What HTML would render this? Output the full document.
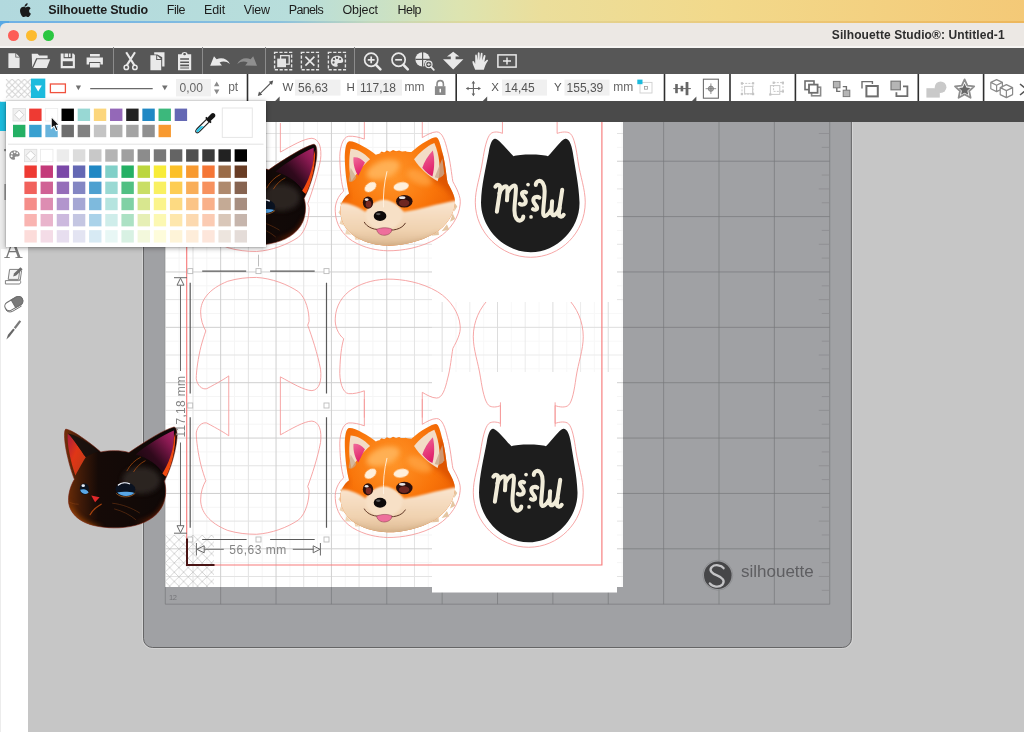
<!DOCTYPE html>
<html>
<head>
<meta charset="utf-8">
<title>Silhouette Studio</title>
<style>
html,body{margin:0;padding:0;}
body{width:1024px;height:732px;overflow:hidden;position:relative;background:#c6c6c6;font-family:"Liberation Sans",sans-serif;}
.abs{position:absolute;}
#menubar,#titlebar,.lbl,svg.abs{opacity:0.999;}
#menubar{left:0;top:0;width:1024px;height:22px;background:linear-gradient(90deg,#b2d9de 0%,#b8dedb 29%,#c9e1c6 37%,#dde4b0 45%,#ebde9b 53%,#f2d98b 70%,#f4c977 100%);}
#menubar span{position:absolute;top:3px;font-size:13px;color:#1c1c1c;white-space:nowrap;line-height:15px;}
#titlebar{left:0;top:22.6px;width:1024px;height:24.4px;background:#ece8e4;border-top-left-radius:6px;}
#mline{left:0;top:21.2px;width:1024px;height:1.6px;background:linear-gradient(90deg,#6eb0e5 0%,#8ac0de 27%,#c2d8bd 36%,#dfd99c 46%,#ecc878 75%,#edb75c 100%);}
#blu{left:0;top:21px;width:9px;height:10px;background:#58a8e4;}
#tbline{left:0;top:46.4px;width:1024px;height:1.2px;background:#f7f5f3;}
#titlebar .t{position:absolute;right:19.3px;letter-spacing:0.09px;top:5.8px;font-size:12px;font-weight:bold;color:#2d2d2d;white-space:nowrap;line-height:14px;}
.dot{position:absolute;top:7.2px;width:11px;height:11px;border-radius:50%;}
#tb1{left:0;top:47px;width:1024px;height:27px;background:#575757;}
#tb2{left:0;top:74px;width:1024px;height:27px;background:#fff;}
#tabbar{left:0;top:101px;width:1024px;height:21px;background:#4a4a4a;}
#lefttools{left:0;top:101px;width:28px;height:631px;background:#fff;}
.vsep{position:absolute;top:47px;width:1px;height:27px;background:#8a8a8a;}
.bsep{position:absolute;top:74px;width:2px;height:27px;background:#333;}
.fld{position:absolute;top:79px;height:17px;background:#efefef;}
.lbl{position:absolute;font-size:11.5px;color:#555;line-height:13px;white-space:nowrap;}
</style>
</head>
<body>
<!-- canvas svg -->
<svg class="abs" id="canvas" style="left:0;top:0;opacity:0.999" width="1024" height="732" viewBox="0 0 1024 732">
<defs>
<clipPath id="pageclip"><rect x="165" y="122" width="458" height="465"/></clipPath>
<clipPath id="matclip"><rect x="141" y="122" width="713" height="529"/></clipPath>
<pattern id="hatch" x="165" y="535" width="9.3" height="9.3" patternUnits="userSpaceOnUse"><path d="M0 0L9.3 9.3M9.3 0L0 9.3" stroke="#c9c9c9" stroke-width="0.8" fill="none"/></pattern>
<filter id="b1" x="-10%" y="-10%" width="120%" height="120%"><feGaussianBlur stdDeviation="6"/></filter>
<filter id="b2" x="-20%" y="-20%" width="140%" height="140%"><feGaussianBlur stdDeviation="14"/></filter>
<filter id="b3" x="-20%" y="-20%" width="140%" height="140%"><feGaussianBlur stdDeviation="3"/></filter>
<!-- misul silhouette, coords in 5.23x zoom space of window (460,120) -->
<g id="misul">
<path d="M185 98C170 95 158 120 150 170C135 250 112 340 110 430C108 565 230 692 370 692C510 692 628 565 625 430C622 340 602 250 590 170C582 120 568 95 550 98C530 102 490 160 460 190C430 178 310 178 280 190C250 160 205 102 185 98Z" fill="#1d1d1d"/>
<g transform="translate(130.7,261.5) scale(0.4596)" fill="none" stroke="#f1ecd9" stroke-width="46" stroke-linecap="round" stroke-linejoin="round">
<g id="mishalf">
<path d="M118 190C135 160 180 160 172 215C165 290 145 400 135 475"/>
<path d="M165 265C190 200 250 150 255 215C258 270 252 310 250 345M258 255C285 195 350 140 352 205C352 280 335 380 335 460C335 540 370 590 410 572C430 562 436 545 436 530"/>
<path d="M468 255C445 238 412 250 424 282C436 312 476 330 462 370C452 400 412 398 396 385"/>
<circle cx="490" cy="166" r="21" fill="#f1ecd9" stroke="none"/>
</g>
<use href="#mishalf" transform="rotate(180 507 350)"/>
</g>
</g>
<!-- misul outline (red) in same coordinate space -->
<path id="misulout" d="M222 -40V70C205 62 175 58 160 72C140 92 128 150 118 215C105 300 80 360 80 430C80 590 215 718 370 718C525 718 655 590 655 430C655 360 630 300 617 215C608 150 598 92 578 72C563 58 530 62 508 70V-40" fill="none"/>
<!-- fox: coords in 5.23x zoom space of window (320,120) -->
<radialGradient id="fxo" cx="0.45" cy="0.35" r="0.7"><stop offset="0" stop-color="#ff962a"/><stop offset="0.55" stop-color="#f9750a"/><stop offset="1" stop-color="#e95a00"/></radialGradient>
<linearGradient id="fxc" x1="0" y1="0" x2="0" y2="1"><stop offset="0" stop-color="#fbe6d0"/><stop offset="0.6" stop-color="#f0d2b0"/><stop offset="1" stop-color="#d8b48c"/></linearGradient>
<linearGradient id="fxp" x1="0" y1="0" x2="0.3" y2="1"><stop offset="0" stop-color="#f06a9a"/><stop offset="1" stop-color="#e0206a"/></linearGradient>
<clipPath id="fxclip"><path id="fxhead" d="M150 112C135 118 128 160 130 215C132 275 140 340 152 385C125 405 105 440 106 475C108 530 135 580 185 610C245 645 300 655 352 657C420 658 520 640 600 592C665 552 700 490 705 440C712 410 690 370 668 330C660 290 655 220 640 170C630 125 620 92 608 90C590 88 530 120 478 168C440 160 330 165 292 182C255 150 175 105 150 112Z"/></clipPath>
<g id="fox">
<path d="M124 418L104 436L114 452ZM110 462L96 484L108 500ZM112 515L102 542L126 552ZM138 572L132 598L164 600ZM180 604L184 626L214 626Z" fill="#efd5b6"/>
<path d="M702 430L718 452L702 478ZM694 488L708 518L680 532ZM664 545L676 574L636 582ZM620 580L622 602L580 606Z" fill="#e4c6a2"/>
<path d="M310 176L322 165L336 170L350 160L366 166L382 157L398 164L414 159L430 167L448 163L462 172Z" fill="#f7780f"/>
<use href="#fxhead" fill="url(#fxo)"/>
<g clip-path="url(#fxclip)">
<!-- darker right side shading -->
<path d="M560 300C620 330 690 380 720 450L720 250L640 150Z" fill="#d95000" filter="url(#b2)" opacity="0.8"/>
<path d="M120 250C125 330 140 380 160 400L110 420Z" fill="#d95000" filter="url(#b2)" opacity="0.7"/>
<!-- highlight -->
<ellipse cx="330" cy="260" rx="90" ry="45" fill="#ffb45a" filter="url(#b2)" opacity="0.9" transform="rotate(-20 330 260)"/>
<ellipse cx="520" cy="300" rx="70" ry="35" fill="#ffa848" filter="url(#b2)" opacity="0.7" transform="rotate(25 520 300)"/>
<!-- cream cheeks / muzzle -->
<path d="M90 440C130 420 190 450 240 480C270 440 300 420 335 418C370 420 400 445 440 480C520 470 600 440 720 420L720 680L90 680Z" fill="url(#fxc)" filter="url(#b1)"/>
<ellipse cx="335" cy="500" rx="95" ry="75" fill="#f7e0c6" filter="url(#b1)"/>
<path d="M150 600C260 670 470 670 620 590L620 700L150 700Z" fill="#c9a47c" filter="url(#b2)" opacity="0.8"/>
<!-- ears inner -->
<path d="M160 150C150 200 150 270 165 320C190 280 230 230 262 205C230 170 190 150 160 150Z" fill="#f3dcc6"/>
<path d="M175 195C172 235 185 270 200 292C215 265 225 240 235 222C215 200 195 192 175 195Z" fill="url(#fxp)"/>
<path d="M598 120C560 135 520 170 492 205C520 250 570 295 615 320C635 270 625 180 598 120Z" fill="#f3dcc6"/>
<path d="M590 160C565 185 545 220 535 250C555 275 575 290 588 295C600 250 600 200 590 160Z" fill="url(#fxp)"/>
<path d="M600 300C620 310 640 300 650 280L640 200Z" fill="#c8a88c" filter="url(#b3)" opacity="0.8"/>
<path d="M150 320C165 330 180 320 190 300L160 250Z" fill="#c8a88c" filter="url(#b3)" opacity="0.7"/>
<!-- brow spots -->
<ellipse cx="265" cy="350" rx="34" ry="22" fill="#fff0dc" filter="url(#b3)" transform="rotate(-35 265 352)"/>
<ellipse cx="425" cy="348" rx="40" ry="22" fill="#fff0dc" filter="url(#b3)" transform="rotate(-10 425 350)"/>
<!-- forehead stripe -->
<path d="M350 270C335 330 330 390 332 455" fill="none" stroke="#fff3e4" stroke-width="5" stroke-linecap="round" opacity="0.9"/>
</g>
<!-- eyes -->
<ellipse cx="251" cy="432" rx="27" ry="32" fill="#2a0f0c"/>
<ellipse cx="254" cy="440" rx="15" ry="18" fill="#7a2a22"/>
<ellipse cx="244" cy="416" rx="10" ry="7" fill="#fff" opacity="0.9"/>
<ellipse cx="441" cy="425" rx="43" ry="33" fill="#2a0f0c"/>
<ellipse cx="440" cy="434" rx="27" ry="18" fill="#6e2620"/>
<ellipse cx="430" cy="406" rx="17" ry="7" fill="#fff" opacity="0.9"/>
<!-- nose -->
<ellipse cx="314" cy="502" rx="33" ry="26" fill="#0e0a0a"/>
<ellipse cx="305" cy="492" rx="12" ry="6" fill="#777" opacity="0.7"/>
<!-- mouth -->
<path d="M232 535C245 562 290 580 330 570C380 585 430 570 446 540" fill="none" stroke="#5a3020" stroke-width="5" stroke-linecap="round"/>
<path d="M296 572C300 600 330 606 345 602C365 598 378 585 375 570C350 560 320 562 296 572Z" fill="#ee6f9c" stroke="#7a3040" stroke-width="2.5"/>
</g>
<path id="foxout" d="M150 85C118 88 100 150 104 215C106 280 112 330 124 372C95 395 76 440 80 480C82 545 118 600 170 633C235 672 300 682 352 684C430 685 530 668 615 618C685 575 728 505 733 440C738 400 715 360 695 322C688 285 682 215 667 162C655 110 640 62 610 62C585 62 555 80 535 92V-40M232 -40V100C205 90 175 83 150 85" fill="none"/>
<!-- black cat: coords in 5.23x zoom space of window (40,400) -->
<linearGradient id="ctb" x1="0" y1="0" x2="1" y2="0"><stop offset="0" stop-color="#743008"/><stop offset="0.13" stop-color="#441c08"/><stop offset="0.3" stop-color="#150a07"/><stop offset="1" stop-color="#0e0807"/></linearGradient>
<linearGradient id="cte1" x1="0" y1="0" x2="1" y2="1"><stop offset="0" stop-color="#a81c40"/><stop offset="0.45" stop-color="#e03616"/><stop offset="1" stop-color="#b83c18"/></linearGradient>
<linearGradient id="cte2" x1="0" y1="1" x2="1" y2="0"><stop offset="0" stop-color="#0e0707"/><stop offset="0.45" stop-color="#30091c"/><stop offset="0.8" stop-color="#8a1a52"/><stop offset="1" stop-color="#b02468"/></linearGradient>
<clipPath id="ctclip"><path id="cthead" d="M135 152C122 160 128 230 145 300C155 345 168 385 180 415C158 450 145 500 150 540C158 590 200 632 265 652C320 668 400 675 470 662C550 648 615 610 642 550C660 510 662 460 650 425C680 370 705 290 715 215C720 170 715 138 698 142C650 155 560 210 465 275C430 262 360 262 318 272C275 235 180 160 135 152Z"/></clipPath>
<g id="cat">
<use href="#cthead" fill="url(#ctb)" stroke="#7a2010" stroke-width="3"/>
<g clip-path="url(#ctclip)">
<ellipse cx="530" cy="420" rx="100" ry="70" fill="#342e2c" filter="url(#b2)" opacity="0.75"/>
<path d="M150 520C170 600 240 650 330 660L150 700Z" fill="#a04808" filter="url(#b2)" opacity="0.8"/>
<path d="M470 640C560 640 630 590 650 520L700 650Z" fill="#8a2a08" filter="url(#b2)" opacity="0.6"/>
<!-- left ear inner -->
<path d="M145 175C140 230 160 320 185 395C205 360 225 320 240 300C210 260 175 200 145 175Z" fill="url(#cte1)"/>
<path d="M145 175C175 200 210 260 240 300C262 285 285 275 305 270C255 225 190 180 145 175Z" fill="#16100e" opacity="0.85"/>
<!-- right ear inner -->
<path d="M700 160C640 185 560 235 500 285C560 300 620 340 650 395C685 330 705 240 700 160Z" fill="url(#cte2)"/>
<path d="M500 285C560 300 620 340 650 395C600 330 560 300 500 285Z" fill="#0c0707"/><path d="M700 200C700 260 670 340 640 385C650 395 655 400 660 400C690 340 710 260 708 170Z" fill="#f04a10"/>

<!-- orange whisker-ish strokes -->
<path d="M455 370C470 340 495 315 525 300M490 375C505 350 525 330 550 318" fill="none" stroke="#c85a10" stroke-width="4" stroke-linecap="round" opacity="0.8"/>
<path d="M380 540C430 545 480 565 520 590M390 570C430 580 470 600 500 625M200 545C180 545 165 540 155 535" fill="none" stroke="#9a4a18" stroke-width="3" stroke-linecap="round" opacity="0.7"/>
<!-- muzzle lines -->
<path d="M262 600C275 570 300 560 320 545" fill="none" stroke="#c85010" stroke-width="6" stroke-linecap="round" opacity="0.8"/>
</g>
<!-- eyes -->
<ellipse cx="232" cy="465" rx="24" ry="30" fill="#0c1420"/>
<path d="M210 470C215 490 235 498 254 485C250 470 230 462 210 470Z" fill="#5aa8e8"/>
<ellipse cx="226" cy="448" rx="9" ry="7" fill="#e8f2ff"/>
<ellipse cx="447" cy="468" rx="52" ry="36" fill="#0a1220"/>
<path d="M404 484C424 506 470 508 494 486C470 480 430 478 404 484Z" fill="#58a6e6"/>
<path d="M410 445C425 432 450 430 468 438" fill="none" stroke="#f2f6ff" stroke-width="7" stroke-linecap="round"/>
<path d="M398 488C420 512 470 514 498 488" fill="none" stroke="#c87830" stroke-width="4" opacity="0.8"/>
<!-- nose -->
<path d="M268 500L312 508L288 535Z" fill="#e0282a"/>
</g>
<!-- cat offset outline, zoom coords of window (180,410) -->
<path id="catout" d="M255 -22V135C235 120 200 100 140 68C115 62 90 85 85 120C85 160 95 230 110 290C118 320 128 350 135 370C120 395 108 430 108 470C108 530 150 590 250 630C300 645 350 650 400 650C480 645 560 615 620 575C660 540 676 470 675 420L668 400C690 340 720 250 735 170C742 110 730 62 690 58C650 58 580 100 525 130V-22" fill="none"/>
<path id="catoutfull" d="M318 142C270 112 200 80 140 68C115 62 90 85 85 120C85 160 95 230 110 290C118 320 128 350 135 370C120 395 108 430 108 470C108 530 150 590 250 630C300 645 350 650 400 650C480 645 560 615 620 575C660 540 676 470 675 420L668 400C690 340 720 250 735 170C742 110 730 62 690 58C650 58 560 105 465 148C430 135 360 132 318 142Z" fill="none"/>
<clipPath id="c302"><rect x="432" y="302" width="200" height="200"/></clipPath>

</defs>
<g clip-path="url(#matclip)">
<rect x="142.6" y="60" width="709.8" height="588.3" rx="9.5" fill="none" stroke="#d6d6d6" stroke-width="1"/>
<rect x="143.5" y="60" width="707.9" height="587.5" rx="9" fill="#a0a1a4" stroke="#5c5c5e" stroke-width="0.9"/>
<path d="M165.3 100V604.2M220.67 100V604.2M276.04 100V604.2M331.41 100V604.2M386.78 100V604.2M442.15 100V604.2M497.52 100V604.2M552.89 100V604.2M608.26 100V604.2M663.63 100V604.2M719 100V604.2M774.37 100V604.2M829.74 100V604.2M165.3 105.85H829.8M165.3 161.22H829.8M165.3 216.59H829.8M165.3 271.96H829.8M165.3 327.33H829.8M165.3 382.7H829.8M165.3 438.07H829.8M165.3 493.44H829.8M165.3 548.81H829.8M165.3 604.18H829.8" stroke="#77787b" stroke-width="0.7" fill="none"/>
<path d="M821.8 119.69H829.8M818.8 133.53H829.8M821.8 147.38H829.8M821.8 175.06H829.8M818.8 188.91H829.8M821.8 202.75H829.8M821.8 230.43H829.8M818.8 244.28H829.8M821.8 258.12H829.8M821.8 285.8H829.8M818.8 299.64H829.8M821.8 313.49H829.8M821.8 341.17H829.8M818.8 355.01H829.8M821.8 368.86H829.8M821.8 396.54H829.8M818.8 410.38H829.8M821.8 424.23H829.8M821.8 451.91H829.8M818.8 465.75H829.8M821.8 479.6H829.8M821.8 507.28H829.8M818.8 521.12H829.8M821.8 534.97H829.8M821.8 562.65H829.8M818.8 576.49H829.8M821.8 590.34H829.8" stroke="#8b8c8f" stroke-width="0.8" fill="none"/>
<text x="169" y="600.4" font-size="7.5" fill="#747578" font-family="Liberation Sans, sans-serif" letter-spacing="-0.4">12</text>
<circle cx="717.8" cy="575.2" r="15" fill="none" stroke="#8a8b8e" stroke-width="0.8"/>
<circle cx="717.8" cy="575.2" r="13.8" fill="#464648"/>
<path d="M723.6 568.2C721.4 565 715 564 711.8 567C708.6 570.4 712 573.6 717 575.4C722.6 577.6 725.4 581 722.4 584.6C719.2 588 712.4 587 709.8 583.4" fill="none" stroke="#c4c4c6" stroke-width="2.3" stroke-linecap="round"/>
<text x="741" y="576.7" font-size="17" fill="#5e5e61" font-family="Liberation Sans, sans-serif">silhouette</text>
</g>
<rect x="165" y="122" width="458" height="465" fill="#fff"/>
<g clip-path="url(#pageclip)">
<path d="M179.14 122V587M206.83 122V587M234.51 122V587M262.2 122V587M289.88 122V587M317.57 122V587M345.25 122V587M372.94 122V587M400.62 122V587M428.31 122V587M455.99 122V587M483.68 122V587M511.36 122V587M539.05 122V587M566.73 122V587M594.42 122V587M622.1 122V587M165 147.38H623M165 175.06H623M165 202.75H623M165 230.43H623M165 258.12H623M165 285.8H623M165 313.49H623M165 341.17H623M165 368.86H623M165 396.54H623M165 424.23H623M165 451.91H623M165 479.6H623M165 507.28H623M165 534.97H623M165 562.65H623" stroke="#f5f5f5" stroke-width="1" fill="none"/>
<path d="M192.99 122V587M248.36 122V587M303.72 122V587M359.09 122V587M414.46 122V587M469.83 122V587M525.2 122V587M580.57 122V587M165 133.53H623M165 188.91H623M165 244.28H623M165 299.64H623M165 355.01H623M165 410.38H623M165 465.75H623M165 521.12H623M165 576.49H623" stroke="#e3e3e3" stroke-width="1" fill="none"/>
<path d="M165.3 122V587M220.67 122V587M276.04 122V587M331.41 122V587M386.78 122V587M442.15 122V587M497.52 122V587M552.89 122V587M608.26 122V587M165 161.22H623M165 216.59H623M165 271.96H623M165 327.33H623M165 382.7H623M165 438.07H623M165 493.44H623M165 548.81H623" stroke="#cfcfcf" stroke-width="1" fill="none"/>
<rect x="165" y="535" width="49" height="52" fill="url(#hatch)"/>
</g>
<rect x="432" y="122" width="185" height="180" fill="#fff"/>
<rect x="432" y="372" width="185" height="220.5" fill="#fff"/>
<rect x="432" y="302" width="191" height="70" fill="#fff" opacity="0.3"/>
<g fill="none" stroke="#f59a9a" stroke-width="0.9">
<!-- page red border -->
<path d="M186.7 122V565H601.9V122" stroke="#f77b7b" stroke-width="1.15"/>
<g transform="translate(460,120) scale(0.1912)" stroke-width="4.6"><use href="#misulout"/></g>
<g transform="translate(320,120) scale(0.1912)" stroke-width="4.6"><use href="#foxout"/></g>
<g transform="translate(320,406.7) scale(0.1912)" stroke-width="4.6"><use href="#foxout"/></g>
<g transform="translate(458,410) scale(0.1912)" stroke-width="4.6"><use href="#misulout"/></g>
<g transform="translate(180,410) scale(0.1912)" stroke-width="4.6"><use href="#catout"/><use href="#catout" transform="translate(0,-43.4) scale(1,-1)"/></g>
<g transform="translate(180,127.2) scale(0.1912)" stroke-width="4.6"><use href="#catout"/></g>
<g transform="translate(320,406.7) scale(0.1912)" stroke-width="4.6"><use href="#foxout" transform="translate(0,16.8) scale(1,-1)"/></g>
<g clip-path="url(#c302)"><g transform="translate(458,410) scale(0.1912)" stroke-width="4.6"><use href="#misulout" transform="translate(0,47) scale(1,-1)"/></g></g>
</g>
<g transform="translate(460,120) scale(0.1912)"><use href="#misul"/></g>
<g transform="translate(458,410) scale(0.1912)"><use href="#misul"/></g>
<g transform="translate(320,120) scale(0.1912)"><use href="#fox"/></g>
<g transform="translate(320,406.7) scale(0.1912)"><use href="#fox"/></g>
<g transform="translate(40,400) scale(0.1912)"><use href="#cat"/></g>
<g transform="translate(179.8,117.2) scale(0.1912)"><use href="#cat"/></g>
<g id="sel" fill="none" stroke="#5a5a5a" stroke-width="1.2">
<path d="M202.2 271.1H246.2M270.1 271.1H314.7M202.2 539.5H246.6M270.1 539.5H314.7M190.2 282.8V393.4M190.2 417.2V527.7M326.5 282.8V393.4M326.5 417.2V527.7"/>
<path d="M258.5 254.7V266.4" stroke="#bdbdbd" stroke-width="1"/>
<g stroke="#bcbcbc" stroke-width="0.9" fill="#fff">
<rect x="187.7" y="268.6" width="5" height="5"/><rect x="256" y="268.6" width="5" height="5"/><rect x="324" y="268.6" width="5" height="5"/>
<rect x="187.7" y="403" width="5" height="5"/><rect x="324" y="403" width="5" height="5"/>
<rect x="187.7" y="537" width="5" height="5"/><rect x="256" y="537" width="5" height="5"/><rect x="324" y="537" width="5" height="5"/>
</g>
<g stroke="#6a6a6a" stroke-width="1">
<path d="M174 277.7H187M180.5 278.2L177 285.2H184ZM180.5 285.2V371M180.5 442.5V526M180.5 532.7L177 525.7H184ZM174 533.2H187"/>
<path d="M196.4 543V555.5M196.9 549.3L204.2 545.8V552.8ZM204.2 549.3H223.8M292.8 549.3H313.7M320 549.3L313.2 545.8V552.8ZM320.4 543V555.5"/>
</g>
</g>
<text x="229.3" y="553.8" font-family="Liberation Sans, sans-serif" font-size="12" letter-spacing="0.5" fill="#858585">56,63 mm</text>
<text transform="translate(185.3,437.6) rotate(-90)" font-family="Liberation Sans, sans-serif" font-size="12" letter-spacing="0.3" fill="#858585">117,18 mm</text>
<path d="M187 538.5V565H214.5" fill="none" stroke="#4a1414" stroke-width="2"/>

</svg>

<div class="abs" id="menubar">
<svg class="abs" style="left:19px;top:2.5px" width="13" height="16" viewBox="0 0 13 16"><path d="M8.6 0.2C8.7 1.1 8.3 2 7.8 2.6C7.2 3.3 6.3 3.8 5.5 3.7C5.4 2.8 5.8 1.9 6.3 1.4C6.9 0.7 7.9 0.2 8.6 0.2ZM11.6 5.4C11.4 5.5 10.1 6.3 10.1 7.9C10.1 9.8 11.8 10.5 11.9 10.5C11.9 10.6 11.6 11.5 11 12.4C10.4 13.2 9.9 14 9 14C8.1 14 7.8 13.5 6.8 13.5C5.8 13.5 5.4 14 4.6 14C3.7 14.1 3.1 13.2 2.5 12.4C1.3 10.7 0.4 7.6 1.6 5.5C2.2 4.5 3.3 3.8 4.4 3.8C5.3 3.8 6.1 4.4 6.7 4.4C7.2 4.4 8.2 3.7 9.3 3.8C9.8 3.8 11 4 11.6 5.4Z" fill="#1a1a1a"/></svg>
<span style="left:48.3px;font-weight:bold;font-size:12.5px;letter-spacing:-0.18px">Silhouette Studio</span>
<span style="left:166.8px;font-size:12.5px;letter-spacing:-0.5px">File</span>
<span style="left:204px;font-size:12.5px;letter-spacing:-0.13px">Edit</span>
<span style="left:243.7px;font-size:12.5px;letter-spacing:-0.15px">View</span>
<span style="left:288.8px;font-size:12.5px;letter-spacing:-0.66px">Panels</span>
<span style="left:342.5px;font-size:12.5px;letter-spacing:-0.11px">Object</span>
<span style="left:397.5px;font-size:12.5px;letter-spacing:-0.55px">Help</span>
</div>
<div class="abs" id="mline"></div><div class="abs" id="blu"></div>
<div class="abs" id="titlebar">
<div class="dot" style="left:7.8px;background:#fd5d56"></div>
<div class="dot" style="left:25.6px;background:#fdbb2e"></div>
<div class="dot" style="left:43.4px;background:#2ac640"></div>
<div class="t">Silhouette Studio®: Untitled-1</div>
</div>
<div class="abs" id="tb1"></div><div class="abs" id="tbline"></div>
<div class="abs" id="tb2"></div>
<div class="abs" id="tabbar"></div>
<svg class="abs" style="left:0;top:101px" width="28" height="631" viewBox="0 101 28 631">
<rect x="0" y="101" width="28" height="631" fill="#fff"/>
<rect x="0" y="101" width="1" height="631" fill="#ececec"/>
<rect x="0" y="131" width="7" height="118" fill="#ececec"/>
<rect x="0" y="101.8" width="6" height="29.2" fill="#1cbbdd"/>
<rect x="4.2" y="149" width="1.6" height="2.2" fill="#777"/><rect x="4.4" y="184" width="1.4" height="16" fill="#8a8a8a"/>
<text x="4" y="257.6" font-family="Liberation Serif, serif" font-size="26" fill="#7a7a7a">A</text>
<!-- sketch -->
<g fill="none" stroke="#808080" stroke-width="1">
<path d="M9.6 269.4H19.8L18.6 279.4H8.2Z" fill="#f4f4f4"/>
<path d="M5.4 280.6H18.8C19.8 280.6 20.2 279.6 19.2 279.4M5.4 280.6V284H19.2C20.6 284 21.2 282 20.2 280.4L21.6 270.4" />
</g>
<path d="M13.2 276.4L14 273.4L20.4 267.2L22.6 269.2L16.2 275.6Z" fill="#6e6e6e"/>
<!-- eraser -->
<g transform="translate(13.8,303.6) rotate(-30)">
<rect x="-9.6" y="-4.4" width="19.2" height="8.8" rx="4.2" fill="#fff" stroke="#6e6e6e" stroke-width="1.1"/>
<path d="M-0.4 -4.4H5.4A4.2 4.2 0 0 1 5.4 4.4H-0.4Z" fill="#7a7a7a" stroke="#6e6e6e" stroke-width="1.1"/>
</g>
<path d="M5.8 309.6C7 312 10.4 312.6 12.8 311.2L21.6 306" fill="none" stroke="#6e6e6e" stroke-width="1"/>
<!-- knife -->
<path d="M6.4 339.6L8 334.8L13.2 328.4L14.8 329.8L9.6 336.4Z" fill="#666"/>
<path d="M13.8 327.6L19.4 320.2L21.2 321.6L15.6 329Z" fill="#7a7a7a"/>
</svg>

<svg class="abs" style="left:0;top:47px" width="1024" height="54" viewBox="0 47 1024 54">
<!-- dark toolbar separators -->
<path d="M113.5 47V74M202.5 47V74M265.5 47V74M354.5 47V74" stroke="#8c8c8c" stroke-width="1" fill="none"/>
<g fill="#e9e9e9">
<!-- new -->
<path d="M8.4 53.3H15.4V57.6H19.6V68.1H8.4ZM16.2 53.5L19.4 56.8H16.2Z"/>
<!-- open -->
<path d="M31.7 53.8H37.6L39.2 55.5H47.6V58.2H36.2L32.2 67.2ZM37.2 59.2H50.2L46.8 68.1H33.2Z"/>
<!-- save -->
<path d="M60.7 53.5H63.6V58.2H72.2V53.5H73.4L74.9 55V68.3H60.7ZM62.8 61.2V66H72.8V61.2ZM68.8 53.5H70.6V57H68.8Z" fill-rule="evenodd"/>
<rect x="64.6" y="53.5" width="3.4" height="3.6"/>
<!-- print -->
<path d="M90 54H99.8V56.6H90ZM86.6 57.4H102.9V64.4H100.4V62H89.2V64.4H86.6ZM90 62.9H99.8V67.6H90Z"/>
<!-- scissors -->
<g fill="none" stroke="#e9e9e9">
<path d="M126.2 52.2L134.6 65.6M135 52.2L126.6 65.6" stroke-width="2.1"/>
<circle cx="126.3" cy="67.4" r="2.2" stroke-width="1.5"/><circle cx="134.9" cy="67.4" r="2.2" stroke-width="1.5"/>
</g>
<!-- copy -->
<path d="M154.2 52.2H164.5V66.4H162.2V57.2L157.4 54.4H154.2Z"/>
<path d="M150.4 55.2H156.2V60H161.2V70.2H150.4ZM157.2 55.4L161 59H157.2Z"/>
<!-- paste -->
<path d="M178 54.2H181.6C181.8 52.8 183 52 184.6 52C186.2 52 187.4 52.8 187.6 54.2H191.2V70.2H178ZM180.2 58.2V59.8H189V58.2ZM180.2 61.4V63H189V61.4ZM180.2 64.6V66.2H189V64.6ZM180.2 67.4V68.6H189V67.4ZM183.2 54.2A1.4 1.1 0 0 0 186 54.2A1.4 1.1 0 0 0 183.2 54.2Z" fill-rule="evenodd"/>
<!-- undo -->
<path d="M210.2 65.8L214 56.2L216.6 59.2C221.5 57 227.5 58.6 230 64C226.5 61 222.5 60.8 219.6 62.6L222 65.4Z"/>
</g>
<path d="M257 65.8L253.2 56.2L250.6 59.2C245.7 57 239.7 58.6 237.2 64C240.7 61 244.7 60.8 247.6 62.6L245.2 65.4Z" fill="#8f8f8f"/>
<!-- select all -->
<g fill="none" stroke="#e4e4e4" stroke-width="1.4" stroke-dasharray="3.2 1.6">
<rect x="274.6" y="52.4" width="17" height="17.4"/><rect x="301.4" y="52.4" width="17" height="17.4"/><rect x="328.4" y="52.4" width="17" height="17.4"/>
</g>
<rect x="280.6" y="55.6" width="8.6" height="8.6" fill="none" stroke="#e4e4e4" stroke-width="1.3"/>
<rect x="277.2" y="58.6" width="8.8" height="8.6" fill="#e4e4e4"/>
<path d="M305.4 56.6L314.4 65.6M314.4 56.6L305.4 65.6" stroke="#e9e9e9" stroke-width="1.6" fill="none"/>
<g transform="translate(330.6,55.4)"><path d="M6.4 0.4C2.8 0.4 0.2 2.9 0.2 6C0.2 9.3 2.9 11.4 5.8 11.4C7.2 11.4 7.4 10.3 6.9 9.6C6.3 8.6 7 7.6 8.2 7.6H10C11.7 7.6 12.6 6.6 12.6 5.3C12.6 2.4 9.8 0.4 6.4 0.4Z" fill="#e4e4e4"/><circle cx="3.4" cy="3.8" r="1.15" fill="#575757"/><circle cx="6.4" cy="2.5" r="1.15" fill="#575757"/><circle cx="9.5" cy="3.7" r="1.15" fill="#575757"/><circle cx="2.9" cy="7.1" r="1.15" fill="#575757"/></g>
<!-- zoom in/out -->
<g fill="none" stroke="#e9e9e9">
<circle cx="371.2" cy="59.8" r="6.6" stroke-width="1.7"/><path d="M376 64.8L380.4 69.4" stroke-width="2.6" stroke-linecap="round"/><path d="M367.8 59.8H374.6M371.2 56.4V63.2" stroke-width="1.7"/>
<circle cx="398.6" cy="59.8" r="6.6" stroke-width="1.7"/><path d="M403.4 64.8L407.8 69.4" stroke-width="2.6" stroke-linecap="round"/><path d="M395.2 59.8H402" stroke-width="1.7"/>
</g>
<!-- zoom select: pie + small magnifier -->
<circle cx="422.6" cy="59.4" r="7.2" fill="#e9e9e9"/>
<path d="M422.6 52V59.4H430" stroke="#575757" stroke-width="1.2" fill="none"/>
<path d="M415.4 59.4H422.6V66.8" stroke="#575757" stroke-width="1.2" fill="none"/>
<circle cx="428.8" cy="64.4" r="4.6" fill="#575757"/>
<circle cx="428.8" cy="64.4" r="3.2" fill="none" stroke="#e9e9e9" stroke-width="1.2"/>
<path d="M427.2 64.4H430.4M428.8 62.8V66" stroke="#e9e9e9" stroke-width="0.9"/>
<path d="M431.2 67L433.8 69.8" stroke="#e9e9e9" stroke-width="1.8" stroke-linecap="round"/>
<!-- drag zoom -->
<path d="M453.2 51.8L459.4 56.6H455.6V59.2H463.4L453.2 69.4L443 59.2H450.8V56.6H447Z" fill="#e9e9e9"/>
<!-- hand -->
<path d="M475.2 69.8C474.2 66.8 472.6 64.6 472.4 61.8C472.4 60.8 473.6 60.6 474 61.6L475.2 64V55.4C475.2 54.2 476.8 54.2 476.9 55.4L477.4 60.4L477.8 53.2C477.9 52 479.5 52 479.6 53.2L479.8 60.2L480.8 53.6C481 52.4 482.6 52.6 482.5 53.8L482.2 60.6L483.8 55.6C484.2 54.4 485.7 54.9 485.5 56.1L484.4 62L486.6 60C487.4 59.3 488.5 60.2 487.8 61.1C485.8 63.6 485 66.6 483.8 69.8Z" fill="#e9e9e9"/>
<!-- fit -->
<rect x="497.9" y="54.9" width="18.2" height="12.2" fill="none" stroke="#e9e9e9" stroke-width="1.5"/>
<path d="M503 61H511M507 57.4V64.6" stroke="#e9e9e9" stroke-width="1.5" fill="none"/>

<!-- ===== light toolbar ===== -->
<!-- black separators -->
<path d="M247.5 74V101M456.2 74V101M664.5 74V101M730 74V101M795.4 74V101M918.3 74V101M983.6 74V101" stroke="#2f2f2f" stroke-width="1.6" fill="none"/>
<!-- fill pattern + cyan dropdown -->
<defs><pattern id="tbh" x="5.9" y="79" width="6.2" height="6.2" patternUnits="userSpaceOnUse"><path d="M0 0L6.2 6.2M6.2 0L0 6.2" stroke="#cfcfcf" stroke-width="0.9" fill="none"/></pattern></defs>
<rect x="5.9" y="79" width="25" height="18.7" fill="url(#tbh)"/>
<rect x="30.9" y="78.6" width="14.4" height="19.4" fill="#1cbbdd"/>
<path d="M34.6 85.4H41.8L38.2 91.6Z" fill="#fff"/>
<rect x="50.4" y="84" width="15" height="8.6" fill="#fff" stroke="#f0523e" stroke-width="1.3"/>
<path d="M75.8 85.4H81L78.4 90.2Z" fill="#707070"/>
<path d="M90.2 88.7H152.7" stroke="#6a6a6a" stroke-width="1.3"/>
<path d="M162 85.4H167.6L164.8 90.2Z" fill="#707070"/>
<rect x="176" y="79" width="35" height="17.4" fill="#f0f0f0"/>
<path d="M214 86.2L216.7 81.6L219.4 86.2ZM214 89.6L216.7 94.2L219.4 89.6Z" fill="#8a8a8a"/>
<!-- diagonal arrow -->
<path d="M259.6 94.2L271.4 82.4" stroke="#555" stroke-width="1.2"/><path d="M257.8 96L259 91.6L262.2 94.8ZM273.2 80.6L272 85L268.8 81.8Z" fill="#555"/>
<path d="M279.6 96.6V101H275.2Z" fill="#555"/>
<rect x="295" y="79.6" width="45.5" height="16" fill="#f0f0f0"/>
<rect x="357" y="79.6" width="45" height="16" fill="#f0f0f0"/>
<!-- lock -->
<path d="M437 86.4V84.2C437 79.4 443.4 79.4 443.4 84.2V86.4" fill="none" stroke="#8a8a8a" stroke-width="1.6"/>
<rect x="434.9" y="86.2" width="10.6" height="8.8" fill="#8a8a8a"/><rect x="439.5" y="88.8" width="1.5" height="3.6" fill="#fff"/>
<!-- move cross -->
<path d="M466.8 88.5H480M473.4 81.8V95.2" stroke="#666" stroke-width="1.1"/>
<path d="M465.8 88.5L468.6 86.7V90.3ZM481 88.5L478.2 86.7V90.3ZM473.4 80.8L471.6 83.6H475.2ZM473.4 96.2L471.6 93.4H475.2Z" fill="#666"/>
<path d="M487.2 96.6V101H482.8Z" fill="#555"/>
<rect x="502" y="79.6" width="45" height="16" fill="#f0f0f0"/>
<rect x="564.5" y="79.6" width="45" height="16" fill="#f0f0f0"/>
<!-- anchor ref -->
<rect x="640" y="82.4" width="12" height="10.6" fill="#fff" stroke="#cfcfcf" stroke-width="0.9"/>
<rect x="644.6" y="86.4" width="2.8" height="2.8" fill="#fff" stroke="#9a9a9a" stroke-width="0.8"/>
<rect x="637.3" y="79.6" width="5.2" height="4.6" fill="#1cbbdd"/>
<!-- align -->
<path d="M673.3 88.6H690.9" stroke="#666" stroke-width="1"/>
<rect x="675.2" y="84" width="2.6" height="9.2" fill="#666"/><rect x="680.6" y="85.8" width="2.6" height="5.6" fill="#666"/><rect x="685.6" y="82" width="2.8" height="13.2" fill="#666"/>
<path d="M696.4 96.6V101H692Z" fill="#555"/>
<!-- center to page -->
<rect x="703.4" y="79.2" width="15" height="19" fill="#fff" stroke="#6e6e6e" stroke-width="1.1"/>
<circle cx="710.9" cy="88.7" r="2.6" fill="#b5b5b5" stroke="#777" stroke-width="0.8"/>
<path d="M705.6 88.7H716.2M710.9 83.4V94" stroke="#777" stroke-width="0.8"/>
<!-- group / ungroup (disabled) -->
<g fill="none" stroke="#c9c9c9" stroke-width="1">
<rect x="742" y="83.4" width="11" height="10.6" stroke-dasharray="2 1.2"/><rect x="744.6" y="86.4" width="8" height="7.4"/>
<rect x="770.4" y="85.6" width="9.4" height="8.8" /><rect x="773.6" y="82.6" width="9.4" height="8.8" stroke-dasharray="2 1.2"/>
</g>
<g fill="#c4c4c4"><rect x="740.8" y="82.2" width="2.2" height="2.2"/><rect x="752" y="82.2" width="2.2" height="2.2"/><rect x="740.8" y="93" width="2.2" height="2.2"/><rect x="752" y="93" width="2.2" height="2.2"/>
<rect x="769.2" y="93.4" width="2.2" height="2.2"/><rect x="781.8" y="81.6" width="2.2" height="2.2"/><rect x="772.6" y="81.6" width="2.2" height="2.2"/><rect x="781.8" y="90.4" width="2.2" height="2.2"/></g>
<!-- order icons -->
<g fill="none" stroke="#6e6e6e" stroke-width="1.6">
<rect x="805" y="81" width="9" height="8.6" /><rect x="811.6" y="87.2" width="9" height="8.6" stroke="#8a8a8a"/>
<rect x="809" y="84.6" width="8.6" height="8.2" fill="#fff" stroke="#6e6e6e" stroke-width="1.8"/>
</g>
<g>
<rect x="833.4" y="81.4" width="6.6" height="6.4" fill="#b5b5b5" stroke="#7a7a7a" stroke-width="1"/>
<rect x="843.2" y="90.2" width="6.6" height="6.4" fill="#b5b5b5" stroke="#7a7a7a" stroke-width="1"/>
<path d="M836.8 88V91.4H840.4M846.4 90V86.6H842.8" fill="none" stroke="#6e6e6e" stroke-width="1.4"/>
</g>
<g fill="none" stroke="#6e6e6e">
<path d="M862 88.4V81.6H872.4V84" stroke-width="1.4"/><rect x="866.4" y="86" width="11.4" height="10.4" stroke-width="2" fill="#fff"/>
</g>
<g>
<rect x="891" y="81.2" width="9.4" height="8.6" fill="#b5b5b5" stroke="#7a7a7a" stroke-width="1.2"/>
<path d="M903 86.4H907.4V96.2H896.4V92.2" fill="none" stroke="#6e6e6e" stroke-width="1.8"/>
</g>
<!-- weld (disabled) -->
<rect x="926.4" y="88.2" width="13.4" height="9.4" fill="#c9c9c9"/><circle cx="940.6" cy="87.2" r="5.8" fill="#c9c9c9"/>
<!-- star -->
<path id="star" d="M964.6 79.4L967.4 85.6L974.2 86.4L969.2 91L970.6 97.8L964.6 94.4L958.6 97.8L960 91L955 86.4L961.8 85.6Z" fill="#fff" stroke="#8e8e8e" stroke-width="1.8" stroke-linejoin="round"/>
<path d="M964.6 83.6L966.4 87.4L970.4 87.9L967.4 90.7L968.2 94.8L964.6 92.8L961 94.8L961.8 90.7L958.8 87.9L962.8 87.4Z" fill="#686868"/>
<!-- 3d cubes -->
<g fill="#fff" stroke="#8a8a8a" stroke-width="1.2" stroke-linejoin="round">
<path d="M996.6 79.6L1002.4 82.4V88.8L996.6 91.6L990.8 88.8V82.4ZM990.8 82.4L996.6 85.2L1002.4 82.4M996.6 85.2V91.6"/>
<path d="M1006.4 84.6L1012.6 87.6V94.6L1006.4 97.6L1000.2 94.6V87.6ZM1000.2 87.6L1006.4 90.6L1012.6 87.6M1006.4 90.6V97.6"/>
</g>
<path d="M1020 84L1026 89M1020 95L1026 90" stroke="#555" stroke-width="1.6"/>
</svg>
<!-- toolbar labels -->
<div class="lbl" style="left:179.6px;top:82px;font-size:12px;color:#666">0,00</div>
<div class="lbl" style="left:228.2px;top:81.4px;font-size:12px;color:#666">pt</div>
<div class="lbl" style="left:282.6px;top:81.4px;color:#555">W</div>
<div class="lbl" style="left:298px;top:82.4px;color:#555;font-size:12px">56,63</div>
<div class="lbl" style="left:346.4px;top:81.4px;color:#555">H</div>
<div class="lbl" style="left:360px;top:82.4px;color:#555;font-size:12px">117,18</div>
<div class="lbl" style="left:404.6px;top:81.4px;color:#666;font-size:12px">mm</div>
<div class="lbl" style="left:491.2px;top:81.4px;color:#555">X</div>
<div class="lbl" style="left:504.6px;top:82.4px;color:#555;font-size:12px">14,45</div>
<div class="lbl" style="left:554px;top:81.4px;color:#555">Y</div>
<div class="lbl" style="left:566.6px;top:82.4px;color:#555;font-size:12px">155,39</div>
<div class="lbl" style="left:613.2px;top:81.4px;color:#666;font-size:12px">mm</div>

<div class="abs" style="left:6px;top:101px;width:259.5px;height:146px;background:#fff;box-shadow:0 1px 5px rgba(0,0,0,0.38),0 0 0 0.5px rgba(0,0,0,0.12);"></div>
<svg class="abs" style="left:0;top:0" width="280" height="260" viewBox="0 0 280 260">
<g><rect x="13" y="108.6" width="12.4" height="12.4" fill="#f0f0f0" stroke="#dcdcdc" stroke-width="0.8"/><path d="M19.2 110.1L23.9 114.8L19.2 119.5L14.5 114.8Z" fill="#fff" stroke="#c8c8c8" stroke-width="0.8"/></g>
<rect x="29.17" y="108.6" width="12.4" height="12.4" fill="#ee3a33"/>
<rect x="45.34" y="108.6" width="12.4" height="12.4" fill="#fff" stroke="#ececec" stroke-width="0.8"/>
<rect x="61.51" y="108.6" width="12.4" height="12.4" fill="#000000"/>
<rect x="77.68" y="108.6" width="12.4" height="12.4" fill="#98d8d4"/>
<rect x="93.85" y="108.6" width="12.4" height="12.4" fill="#fcd67c"/>
<rect x="110.02" y="108.6" width="12.4" height="12.4" fill="#9468b8"/>
<rect x="126.19" y="108.6" width="12.4" height="12.4" fill="#222222"/>
<rect x="142.36" y="108.6" width="12.4" height="12.4" fill="#2088c4"/>
<rect x="158.53" y="108.6" width="12.4" height="12.4" fill="#3cb87c"/>
<rect x="174.7" y="108.6" width="12.4" height="12.4" fill="#6468b4"/>
<rect x="13" y="124.8" width="12.4" height="12.4" fill="#24b064"/>
<rect x="29.17" y="124.8" width="12.4" height="12.4" fill="#38a0d0"/>
<rect x="45.34" y="124.8" width="12.4" height="12.4" fill="#68b4dc"/>
<rect x="61.51" y="124.8" width="12.4" height="12.4" fill="#6e6e6e"/>
<rect x="77.68" y="124.8" width="12.4" height="12.4" fill="#828282"/>
<rect x="93.85" y="124.8" width="12.4" height="12.4" fill="#c4c4c4"/>
<rect x="110.02" y="124.8" width="12.4" height="12.4" fill="#b0b0b0"/>
<rect x="126.19" y="124.8" width="12.4" height="12.4" fill="#a4a4a4"/>
<rect x="142.36" y="124.8" width="12.4" height="12.4" fill="#909090"/>
<rect x="158.53" y="124.8" width="12.4" height="12.4" fill="#f89a30"/>
<path d="M8 144.2H263.5" stroke="#e2e2e2" stroke-width="1"/>
<rect x="222.3" y="108" width="30" height="29.4" fill="#fff" stroke="#e6e6e6" stroke-width="1"/>
<g><rect x="24.4" y="149.3" width="12.4" height="12.4" fill="#f0f0f0" stroke="#dcdcdc" stroke-width="0.8"/><path d="M30.6 150.8L35.3 155.5L30.6 160.2L25.9 155.5Z" fill="#fff" stroke="#c8c8c8" stroke-width="0.8"/></g>
<rect x="40.57" y="149.3" width="12.4" height="12.4" fill="#fff" stroke="#e8e8e8" stroke-width="0.8"/>
<rect x="56.74" y="149.3" width="12.4" height="12.4" fill="#ececec"/>
<rect x="72.91" y="149.3" width="12.4" height="12.4" fill="#dcdcdc"/>
<rect x="89.08" y="149.3" width="12.4" height="12.4" fill="#c8c8c8"/>
<rect x="105.25" y="149.3" width="12.4" height="12.4" fill="#b4b4b4"/>
<rect x="121.42" y="149.3" width="12.4" height="12.4" fill="#a0a0a0"/>
<rect x="137.59" y="149.3" width="12.4" height="12.4" fill="#8c8c8c"/>
<rect x="153.76" y="149.3" width="12.4" height="12.4" fill="#787878"/>
<rect x="169.93" y="149.3" width="12.4" height="12.4" fill="#646464"/>
<rect x="186.1" y="149.3" width="12.4" height="12.4" fill="#505050"/>
<rect x="202.27" y="149.3" width="12.4" height="12.4" fill="#3a3a3a"/>
<rect x="218.44" y="149.3" width="12.4" height="12.4" fill="#222222"/>
<rect x="234.61" y="149.3" width="12.4" height="12.4" fill="#000000"/>
<rect x="24.4" y="165.47" width="12.4" height="12.4" fill="#ee3a33"/>
<rect x="40.57" y="165.47" width="12.4" height="12.4" fill="#c43a7a"/>
<rect x="56.74" y="165.47" width="12.4" height="12.4" fill="#7a48a8"/>
<rect x="72.91" y="165.47" width="12.4" height="12.4" fill="#6468b4"/>
<rect x="89.08" y="165.47" width="12.4" height="12.4" fill="#2088c4"/>
<rect x="105.25" y="165.47" width="12.4" height="12.4" fill="#80d0c8"/>
<rect x="121.42" y="165.47" width="12.4" height="12.4" fill="#24b064"/>
<rect x="137.59" y="165.47" width="12.4" height="12.4" fill="#bcd63e"/>
<rect x="153.76" y="165.47" width="12.4" height="12.4" fill="#f8ec38"/>
<rect x="169.93" y="165.47" width="12.4" height="12.4" fill="#fcc028"/>
<rect x="186.1" y="165.47" width="12.4" height="12.4" fill="#f89a30"/>
<rect x="202.27" y="165.47" width="12.4" height="12.4" fill="#f57636"/>
<rect x="218.44" y="165.47" width="12.4" height="12.4" fill="#9a6c48"/>
<rect x="234.61" y="165.47" width="12.4" height="12.4" fill="#683c24"/>
<rect x="24.4" y="181.64" width="12.4" height="12.4" fill="#f1615c"/>
<rect x="40.57" y="181.64" width="12.4" height="12.4" fill="#d06195"/>
<rect x="56.74" y="181.64" width="12.4" height="12.4" fill="#956db9"/>
<rect x="72.91" y="181.64" width="12.4" height="12.4" fill="#8386c3"/>
<rect x="89.08" y="181.64" width="12.4" height="12.4" fill="#4da0d0"/>
<rect x="105.25" y="181.64" width="12.4" height="12.4" fill="#99d9d3"/>
<rect x="121.42" y="181.64" width="12.4" height="12.4" fill="#50c083"/>
<rect x="137.59" y="181.64" width="12.4" height="12.4" fill="#c9de65"/>
<rect x="153.76" y="181.64" width="12.4" height="12.4" fill="#f9f060"/>
<rect x="169.93" y="181.64" width="12.4" height="12.4" fill="#fdcd53"/>
<rect x="186.1" y="181.64" width="12.4" height="12.4" fill="#f9ae59"/>
<rect x="202.27" y="181.64" width="12.4" height="12.4" fill="#f7915e"/>
<rect x="218.44" y="181.64" width="12.4" height="12.4" fill="#ae896d"/>
<rect x="234.61" y="181.64" width="12.4" height="12.4" fill="#866350"/>
<rect x="24.4" y="197.81" width="12.4" height="12.4" fill="#f58d89"/>
<rect x="40.57" y="197.81" width="12.4" height="12.4" fill="#dd8db2"/>
<rect x="56.74" y="197.81" width="12.4" height="12.4" fill="#b295cd"/>
<rect x="72.91" y="197.81" width="12.4" height="12.4" fill="#a5a7d4"/>
<rect x="89.08" y="197.81" width="12.4" height="12.4" fill="#7ebadd"/>
<rect x="105.25" y="197.81" width="12.4" height="12.4" fill="#b5e4df"/>
<rect x="121.42" y="197.81" width="12.4" height="12.4" fill="#80d1a5"/>
<rect x="137.59" y="197.81" width="12.4" height="12.4" fill="#d8e78f"/>
<rect x="153.76" y="197.81" width="12.4" height="12.4" fill="#fbf48c"/>
<rect x="169.93" y="197.81" width="12.4" height="12.4" fill="#fdda82"/>
<rect x="186.1" y="197.81" width="12.4" height="12.4" fill="#fbc487"/>
<rect x="202.27" y="197.81" width="12.4" height="12.4" fill="#f9b08a"/>
<rect x="218.44" y="197.81" width="12.4" height="12.4" fill="#c4aa95"/>
<rect x="234.61" y="197.81" width="12.4" height="12.4" fill="#a78e80"/>
<rect x="24.4" y="213.98" width="12.4" height="12.4" fill="#f9b4b1"/>
<rect x="40.57" y="213.98" width="12.4" height="12.4" fill="#e9b4cc"/>
<rect x="56.74" y="213.98" width="12.4" height="12.4" fill="#ccb9de"/>
<rect x="72.91" y="213.98" width="12.4" height="12.4" fill="#c4c6e2"/>
<rect x="89.08" y="213.98" width="12.4" height="12.4" fill="#aad2e9"/>
<rect x="105.25" y="213.98" width="12.4" height="12.4" fill="#cfedea"/>
<rect x="121.42" y="213.98" width="12.4" height="12.4" fill="#ace1c4"/>
<rect x="137.59" y="213.98" width="12.4" height="12.4" fill="#e6efb6"/>
<rect x="153.76" y="213.98" width="12.4" height="12.4" fill="#fcf8b3"/>
<rect x="169.93" y="213.98" width="12.4" height="12.4" fill="#fee7ad"/>
<rect x="186.1" y="213.98" width="12.4" height="12.4" fill="#fcd9b0"/>
<rect x="202.27" y="213.98" width="12.4" height="12.4" fill="#fbcbb3"/>
<rect x="218.44" y="213.98" width="12.4" height="12.4" fill="#d9c7b9"/>
<rect x="234.61" y="213.98" width="12.4" height="12.4" fill="#c6b5ac"/>
<rect x="24.4" y="230.15" width="12.4" height="12.4" fill="#fcdcda"/>
<rect x="40.57" y="230.15" width="12.4" height="12.4" fill="#f4dce7"/>
<rect x="56.74" y="230.15" width="12.4" height="12.4" fill="#e7deef"/>
<rect x="72.91" y="230.15" width="12.4" height="12.4" fill="#e3e4f2"/>
<rect x="89.08" y="230.15" width="12.4" height="12.4" fill="#d7eaf4"/>
<rect x="105.25" y="230.15" width="12.4" height="12.4" fill="#e8f7f5"/>
<rect x="121.42" y="230.15" width="12.4" height="12.4" fill="#d8f1e3"/>
<rect x="137.59" y="230.15" width="12.4" height="12.4" fill="#f3f8dc"/>
<rect x="153.76" y="230.15" width="12.4" height="12.4" fill="#fefcdb"/>
<rect x="169.93" y="230.15" width="12.4" height="12.4" fill="#fef4d8"/>
<rect x="186.1" y="230.15" width="12.4" height="12.4" fill="#feedda"/>
<rect x="202.27" y="230.15" width="12.4" height="12.4" fill="#fde6db"/>
<rect x="218.44" y="230.15" width="12.4" height="12.4" fill="#ede5de"/>
<rect x="234.61" y="230.15" width="12.4" height="12.4" fill="#e4dcd8"/>
<g transform="translate(9,150)"><path d="M5.5 0.5C2.5 0.5 0.3 2.6 0.3 5.2C0.3 8 2.6 9.8 5 9.8C6.2 9.8 6.3 8.9 5.9 8.3C5.4 7.4 6 6.6 7 6.6H8.6C10 6.6 10.7 5.7 10.7 4.6C10.7 2.2 8.4 0.5 5.5 0.5Z" fill="#8a8a8a"/><circle cx="3" cy="3.4" r="1" fill="#fff"/><circle cx="5.6" cy="2.3" r="1" fill="#fff"/><circle cx="8.2" cy="3.3" r="1" fill="#fff"/><circle cx="2.6" cy="6.2" r="1" fill="#fff"/></g>
<g transform="translate(195,112.8)"><path d="M1.2 19.6C0.4 18.8 0.9 17.2 1.8 16.2L11.5 6.5L14.2 9.2L4.5 18.9C3.5 19.8 2 20.3 1.2 19.6Z" fill="#fff" stroke="#222" stroke-width="1.1"/><path d="M1.6 19.2C1.1 18.6 1.5 17.5 2.2 16.8L5.6 13.4L9 13.4L4.1 18.4C3.3 19.2 2.2 19.6 1.6 19.2Z" fill="#2cc4e4"/><path d="M10.2 5.2L15.4 10.4L16.6 9.2L15.6 8.2L19.6 4.4C20.6 3.4 20.6 1.8 19.6 0.9C18.7 0 17.2 0 16.2 1L12.4 4.9L11.4 4Z" fill="#161616"/></g>
<g transform="translate(51.2,116.6) scale(1.02)"><path d="M0 0V11.8L2.8 9.3L4.8 13.8L6.8 12.9L4.8 8.6H8.4Z" fill="#111" stroke="#fff" stroke-width="1" stroke-linejoin="round"/></g>
</svg>
</body>
</html>
